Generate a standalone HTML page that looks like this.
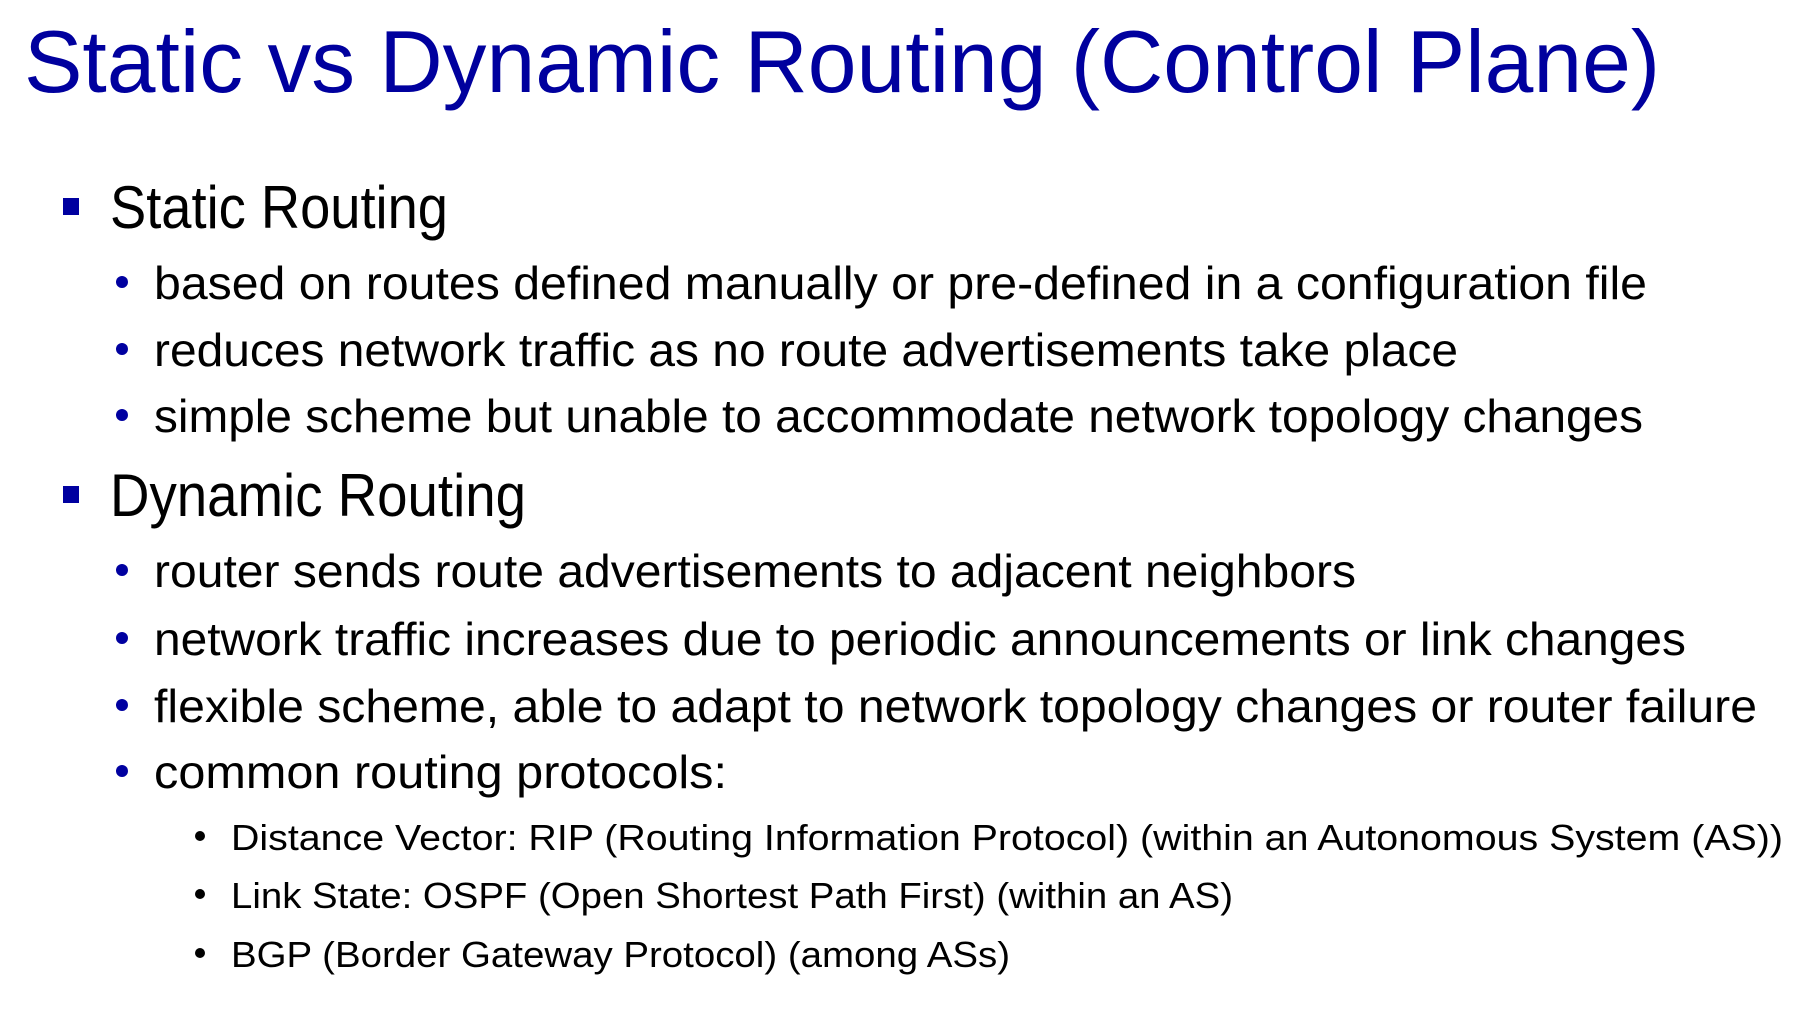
<!DOCTYPE html>
<html><head><meta charset="utf-8"><style>
body{margin:0;width:1810px;height:1014px;background:#fff;overflow:hidden;position:relative;font-family:"Liberation Sans",sans-serif;}
.t{position:absolute;white-space:nowrap;line-height:1;transform-origin:0 0;display:inline-block}
.sq{position:absolute;width:16px;height:17px;background:#0000a0}
.d{position:absolute;width:12px;height:12px;border-radius:50%;background:#0000a0}
.k{position:absolute;width:10px;height:10px;border-radius:50%;background:#000}
</style></head><body>
<span class="t" style="left:24px;top:18px;font-size:88px;color:#00009e">Static vs Dynamic Routing (Control Plane)</span>

<div class="sq" style="left:63px;top:198px"></div>
<span class="t" style="left:110px;top:178px;font-size:60px">Static Routing</span>
<div class="d" style="left:116px;top:276px"></div>
<span class="t" style="left:154px;top:260px;font-size:46px">based on routes defined manually or pre-defined in a configuration file</span>
<div class="d" style="left:116px;top:343px"></div>
<span class="t" style="left:154px;top:327px;font-size:46px">reduces network traffic as no route advertisements take place</span>
<div class="d" style="left:116px;top:409px"></div>
<span class="t" style="left:154px;top:393px;font-size:46px">simple scheme but unable to accommodate network topology changes</span>

<div class="sq" style="left:63px;top:486px"></div>
<span class="t" style="left:110px;top:466px;font-size:60px">Dynamic Routing</span>
<div class="d" style="left:116px;top:564px"></div>
<span class="t" style="left:154px;top:548px;font-size:46px">router sends route advertisements to adjacent neighbors</span>
<div class="d" style="left:116px;top:632px"></div>
<span class="t" style="left:154px;top:616px;font-size:46px">network traffic increases due to periodic announcements or link changes</span>
<div class="d" style="left:116px;top:699px"></div>
<span class="t" style="left:154px;top:683px;font-size:46px">flexible scheme, able to adapt to network topology changes or router failure</span>
<div class="d" style="left:116px;top:765px"></div>
<span class="t" style="left:154px;top:749px;font-size:46px">common routing protocols:</span>

<div class="k" style="left:195px;top:831px"></div>
<span class="t" style="left:231px;top:820px;font-size:36px">Distance Vector: RIP (Routing Information Protocol) (within an Autonomous System (AS))</span>
<div class="k" style="left:195px;top:889px"></div>
<span class="t" style="left:231px;top:878px;font-size:36px">Link State: OSPF (Open Shortest Path First) (within an AS)</span>
<div class="k" style="left:195px;top:948px"></div>
<span class="t" style="left:231px;top:937px;font-size:36px">BGP (Border Gateway Protocol) (among ASs)</span>
<script>
var ends=[1660,448,1647,1458,1643,526,1356,1686,1757,727,1783,1233,1010];
var els=document.querySelectorAll('.t');
for(var i=0;i<els.length;i++){var e=els[i];var w=e.getBoundingClientRect().width;var l=parseFloat(e.style.left);
e.style.transform='scaleX('+((ends[i]-l)/w)+')';}
</script>
</body></html>
